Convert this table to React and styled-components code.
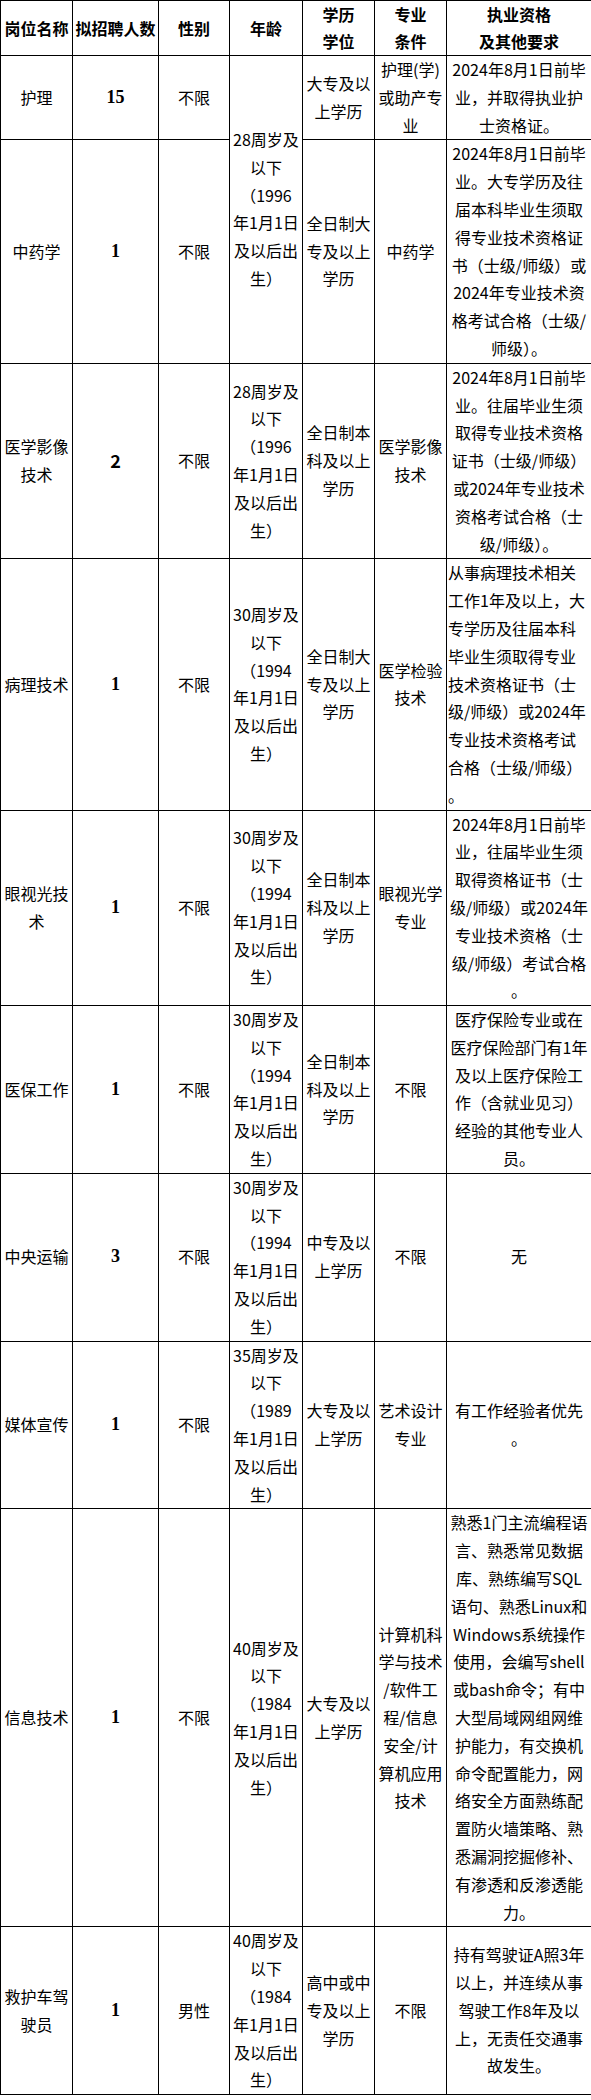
import styled, { createGlobalStyle } from 'styled-components';

//page reset and the base font of the table
const GlobalStyle = createGlobalStyle`
    html, body {
        margin: 0;
        padding: 0;
        background: #fff;
    }
    body {
        font-family: 'Noto Sans CJK SC', 'Noto Sans', sans-serif;
        color: #000;
    }
`;

const Table = styled.table`
    width: 591px;
    table-layout: fixed;
    border-collapse: collapse;
    font-size: 16px;
    line-height: 27.8px;
`;

const HeadCell = styled.th`
    border: 1px solid #000;
    padding: 0;
    font-weight: 700;
    text-align: center;
    vertical-align: middle;
    white-space: nowrap;
    line-height: 27px;
`;

const Cell = styled.td`
    border: 1px solid #000;
    padding: 0 1px;
    text-align: ${(props) => (props.left ? 'left' : 'center')};
    vertical-align: middle;
    white-space: nowrap;
    overflow: hidden;
`;

//the number of people, bold and mostly serif like in the word file
const CountCell = styled(Cell)`
    font-family: ${(props) => (props.sans ? "'Noto Sans CJK SC', sans-serif" : "'Liberation Serif', serif")};
    font-weight: 700;
    font-size: 18px;
`;

const Line = styled.span`
    display: block;
`;

//write each text line on its own, the same way as the reference breaks them
function Lines({ text }) {
    return text.split('|').map((t, i) => <Line key={i}>{t}</Line>);
}

const widths = [72, 86, 71, 73, 72, 72, 145];
const headers = ['岗位名称', '拟招聘人数', '性别', '年龄', '学历|学位', '专业|条件', '执业资格|及其他要求'];

const rows = [
    {
        name: '护理',
        count: '15',
        sex: '不限',
        age: '28周岁及|以下|（1996|年1月1日|及以后出|生）',
        ageSpan: 2,
        edu: '大专及以|上学历',
        major: '护理(学)|或助产专|业',
        req: '2024年8月1日前毕|业，并取得执业护|士资格证。',
    },
    {
        name: '中药学',
        count: '1',
        sex: '不限',
        edu: '全日制大|专及以上|学历',
        major: '中药学',
        req: '2024年8月1日前毕|业。大专学历及往|届本科毕业生须取|得专业技术资格证|书（士级/师级）或|2024年专业技术资|格考试合格（士级/|师级）。',
    },
    {
        name: '医学影像|技术',
        count: '2',
        sans: true,
        sex: '不限',
        age: '28周岁及|以下|（1996|年1月1日|及以后出|生）',
        edu: '全日制本|科及以上|学历',
        major: '医学影像|技术',
        req: '2024年8月1日前毕|业。往届毕业生须|取得专业技术资格|证书（士级/师级）|或2024年专业技术|资格考试合格（士|级/师级）。',
    },
    {
        name: '病理技术',
        count: '1',
        sex: '不限',
        age: '30周岁及|以下|（1994|年1月1日|及以后出|生）',
        edu: '全日制大|专及以上|学历',
        major: '医学检验|技术',
        req: '从事病理技术相关|工作1年及以上，大|专学历及往届本科|毕业生须取得专业|技术资格证书（士|级/师级）或2024年|专业技术资格考试|合格（士级/师级）|。',
        left: true,
    },
    {
        name: '眼视光技|术',
        count: '1',
        sex: '不限',
        age: '30周岁及|以下|（1994|年1月1日|及以后出|生）',
        edu: '全日制本|科及以上|学历',
        major: '眼视光学|专业',
        req: '2024年8月1日前毕|业，往届毕业生须|取得资格证书（士|级/师级）或2024年|专业技术资格（士|级/师级）考试合格|。',
    },
    {
        name: '医保工作',
        count: '1',
        sex: '不限',
        age: '30周岁及|以下|（1994|年1月1日|及以后出|生）',
        edu: '全日制本|科及以上|学历',
        major: '不限',
        req: '医疗保险专业或在|医疗保险部门有1年|及以上医疗保险工|作（含就业见习）|经验的其他专业人|员。',
    },
    {
        name: '中央运输',
        count: '3',
        sex: '不限',
        age: '30周岁及|以下|（1994|年1月1日|及以后出|生）',
        edu: '中专及以|上学历',
        major: '不限',
        req: '无',
    },
    {
        name: '媒体宣传',
        count: '1',
        sex: '不限',
        age: '35周岁及|以下|（1989|年1月1日|及以后出|生）',
        edu: '大专及以|上学历',
        major: '艺术设计|专业',
        req: '有工作经验者优先|。',
    },
    {
        name: '信息技术',
        count: '1',
        sex: '不限',
        age: '40周岁及|以下|（1984|年1月1日|及以后出|生）',
        edu: '大专及以|上学历',
        major: '计算机科|学与技术|/软件工|程/信息|安全/计|算机应用|技术',
        req: '熟悉1门主流编程语|言、熟悉常见数据|库、熟练编写SQL|语句、熟悉Linux和|Windows系统操作|使用，会编写shell|或bash命令；有中|大型局域网组网维|护能力，有交换机|命令配置能力，网|络安全方面熟练配|置防火墙策略、熟|悉漏洞挖掘修补、|有渗透和反渗透能|力。',
    },
    {
        name: '救护车驾|驶员',
        count: '1',
        sex: '男性',
        age: '40周岁及|以下|（1984|年1月1日|及以后出|生）',
        edu: '高中或中|专及以上|学历',
        major: '不限',
        req: '持有驾驶证A照3年|以上，并连续从事|驾驶工作8年及以|上，无责任交通事|故发生。',
    },
];

function App() {
    return (
        <>
            <GlobalStyle />
            <Table>
                <colgroup>
                    {widths.map((w, i) => (
                        <col key={i} style={{ width: w }} />
                    ))}
                </colgroup>
                <thead>
                    <tr>
                        {headers.map((h) => (
                            <HeadCell key={h}>
                                <Lines text={h} />
                            </HeadCell>
                        ))}
                    </tr>
                </thead>
                <tbody>
                    {rows.map((r) => (
                        <tr key={r.name}>
                            <Cell>
                                <Lines text={r.name} />
                            </Cell>
                            <CountCell sans={r.sans}>{r.count}</CountCell>
                            <Cell>{r.sex}</Cell>
                            {r.age ? (
                                <Cell rowSpan={r.ageSpan || 1}>
                                    <Lines text={r.age} />
                                </Cell>
                            ) : null}
                            <Cell>
                                <Lines text={r.edu} />
                            </Cell>
                            <Cell>
                                <Lines text={r.major} />
                            </Cell>
                            <Cell left={r.left}>
                                <Lines text={r.req} />
                            </Cell>
                        </tr>
                    ))}
                </tbody>
            </Table>
        </>
    );
}

export default App;
